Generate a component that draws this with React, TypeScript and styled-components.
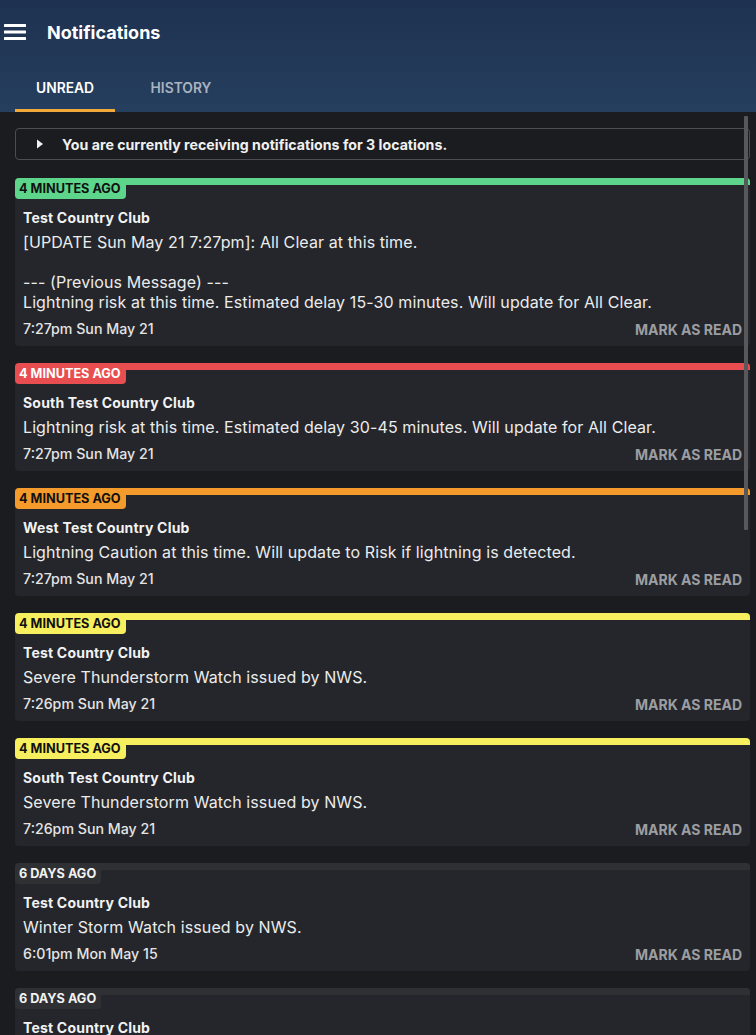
import React, { useState } from "react";
import styled, { createGlobalStyle } from "styled-components";

type Level = "green" | "red" | "orange" | "yellow" | "old";

interface Notice {
  ago: string;
  level: Level;
  club: string;
  message: string;
  time: string;
}

const levelColors: Record<Level, { bg: string; fg: string }> = {
  green: { bg: "#5dd68b", fg: "#111" },
  red: { bg: "#e84d4f", fg: "#fff" },
  orange: { bg: "#f59b2b", fg: "#111" },
  yellow: { bg: "#f7ef5e", fg: "#111" },
  old: { bg: "#2e3034", fg: "#f2f2f2" },
};

const GlobalStyle = createGlobalStyle`
  html, body {
    margin: 0;
    padding: 0;
    background: #1b1c1f;
    font-family: Inter, "Noto Sans", "Liberation Sans", sans-serif;
    color: #ececec;
  }
  * { box-sizing: border-box; }
`;

const Page = styled.div`
  display: flex;
  flex-direction: column;
  height: 100vh;
  background: #1b1c1f;
`;

const Header = styled.header`
  background: linear-gradient(180deg, #1e3150 0%, #263f5e 100%);
  flex-shrink: 0;
`;

const TopBar = styled.div`
  display: flex;
  align-items: center;
  height: 64px;
  padding-left: 4px;
  gap: 21px;
`;

const Title = styled.h1`
  margin: 0;
  font-size: 18px;
  font-weight: 700;
  color: #fff;
`;

const Tabs = styled.div`
  display: flex;
  gap: 16px;
  padding-left: 15px;
  height: 48px;
`;

const Tab = styled.button<{ $active?: boolean }>`
  width: 100px;
  border: none;
  background: transparent;
  font-family: inherit;
  font-size: 13.8px;
  font-weight: 600;
  color: ${(p) => (p.$active ? "#ffffff" : "#aab3c0")};
  border-bottom: 3px solid ${(p) => (p.$active ? "#f2a93b" : "transparent")};
  padding: 3px 0 0;
  cursor: pointer;
`;

const ListArea = styled.div`
  position: relative;
  flex: 1;
  min-height: 0;
`;

const List = styled.main`
  height: 100%;
  overflow-y: auto;
  scrollbar-width: none;
  padding: 16px 6px 16px 15px;
  display: flex;
  flex-direction: column;
  gap: 17px;

  &::-webkit-scrollbar {
    display: none;
  }
`;

const ScrollThumb = styled.div`
  position: absolute;
  top: 4px;
  right: 8px;
  width: 4px;
  height: 414px;
  background: #56585c;
  border-radius: 1px;
  pointer-events: none;
`;

const InfoBox = styled.div`
  display: flex;
  align-items: center;
  height: 32px;
  border: 1px solid #4b4d52;
  border-radius: 4px;
  padding-left: 20px;
  gap: 18px;
  font-size: 14.2px;
  font-weight: 700;
  color: #f0f0f0;
  margin-bottom: 1px;
  flex-shrink: 0;
`;

const Card = styled.article`
  background: #24262b;
  border-radius: 4px;
  flex-shrink: 0;
`;

const CardTop = styled.div`
  display: flex;
  align-items: flex-start;
`;

const Badge = styled.span<{ $level: Level }>`
  height: 21px;
  display: flex;
  align-items: center;
  padding: 0 5px 0 4px;
  border-radius: 4px 0 4px 4px;
  background: ${(p) => levelColors[p.$level].bg};
  color: ${(p) => levelColors[p.$level].fg};
  font-size: 12.7px;
  font-weight: 700;
`;

const Strip = styled.span<{ $level: Level }>`
  flex: 1;
  height: 7px;
  border-radius: 0 4px 0 0;
  background: ${(p) => levelColors[p.$level].bg};
`;

const Body = styled.div`
  padding: 10px 8px 8px 8px;
`;

const Club = styled.div`
  font-size: 14px;
  font-weight: 700;
  line-height: 18px;
  letter-spacing: 0.2px;
  color: #f2f2f2;
`;

const Message = styled.div`
  margin-top: 5px;
  font-size: 16px;
  line-height: 20px;
  letter-spacing: 0.1px;
  color: #ececec;
  white-space: pre-wrap;
`;

const Footer = styled.div`
  margin-top: 8px;
  display: flex;
  justify-content: space-between;
  align-items: center;
  line-height: 18px;
`;

const Time = styled.span`
  font-size: 14.2px;
  font-weight: 500;
  color: #e4e4e4;
`;

const MarkRead = styled.button`
  border: none;
  background: transparent;
  padding: 0;
  font-family: inherit;
  font-size: 14px;
  font-weight: 700;
  color: #9c9ea2;
  cursor: pointer;
`;

const notices: Notice[] = [
  {
    ago: "4 MINUTES AGO",
    level: "green",
    club: "Test Country Club",
    message:
      "[UPDATE Sun May 21 7:27pm]: All Clear at this time.\n\n--- (Previous Message) ---\nLightning risk at this time. Estimated delay 15-30 minutes. Will update for All Clear.",
    time: "7:27pm Sun May 21",
  },
  {
    ago: "4 MINUTES AGO",
    level: "red",
    club: "South Test Country Club",
    message:
      "Lightning risk at this time. Estimated delay 30-45 minutes. Will update for All Clear.",
    time: "7:27pm Sun May 21",
  },
  {
    ago: "4 MINUTES AGO",
    level: "orange",
    club: "West Test Country Club",
    message:
      "Lightning Caution at this time. Will update to Risk if lightning is detected.",
    time: "7:27pm Sun May 21",
  },
  {
    ago: "4 MINUTES AGO",
    level: "yellow",
    club: "Test Country Club",
    message: "Severe Thunderstorm Watch issued by NWS.",
    time: "7:26pm Sun May 21",
  },
  {
    ago: "4 MINUTES AGO",
    level: "yellow",
    club: "South Test Country Club",
    message: "Severe Thunderstorm Watch issued by NWS.",
    time: "7:26pm Sun May 21",
  },
  {
    ago: "6 DAYS AGO",
    level: "old",
    club: "Test Country Club",
    message: "Winter Storm Watch issued by NWS.",
    time: "6:01pm Mon May 15",
  },
  {
    ago: "6 DAYS AGO",
    level: "old",
    club: "Test Country Club",
    message: "Winter Storm Watch issued by NWS.",
    time: "6:00pm Mon May 15",
  },
  {
    ago: "6 DAYS AGO",
    level: "old",
    club: "South Test Country Club",
    message: "Winter Storm Watch issued by NWS.",
    time: "6:00pm Mon May 15",
  },
  {
    ago: "6 DAYS AGO",
    level: "old",
    club: "West Test Country Club",
    message: "Winter Storm Watch issued by NWS.",
    time: "6:00pm Mon May 15",
  },
  {
    ago: "7 DAYS AGO",
    level: "old",
    club: "Test Country Club",
    message: "Lightning risk at this time. Estimated delay 15-30 minutes.",
    time: "4:12pm Sun May 14",
  },
  {
    ago: "7 DAYS AGO",
    level: "old",
    club: "South Test Country Club",
    message: "All Clear at this time.",
    time: "4:40pm Sun May 14",
  },
];

const MenuIcon = () => (
  <svg width="22" height="18" viewBox="0 0 22 18" fill="#ffffff">
    <rect x="0" y="1" width="22" height="3" rx="0.5" />
    <rect x="0" y="7.5" width="22" height="3" rx="0.5" />
    <rect x="0" y="14" width="22" height="3" rx="0.5" />
  </svg>
);

const Caret = () => (
  <svg width="8" height="10" viewBox="0 0 8 10" fill="#f0f0f0">
    <path d="M1 0.5 L7 5 L1 9.5 Z" />
  </svg>
);

const App: React.FC = () => {
  const [tab, setTab] = useState<"unread" | "history">("unread");

  return (
    <Page>
      <GlobalStyle />
      <Header>
        <TopBar>
          <MenuIcon />
          <Title>Notifications</Title>
        </TopBar>
        <Tabs>
          <Tab $active={tab === "unread"} onClick={() => setTab("unread")}>
            UNREAD
          </Tab>
          <Tab $active={tab === "history"} onClick={() => setTab("history")}>
            HISTORY
          </Tab>
        </Tabs>
      </Header>
      <ListArea>
        <List>
          <InfoBox>
            <Caret />
            You are currently receiving notifications for 3 locations.
          </InfoBox>
          {notices.map((n, i) => (
            <Card key={i}>
              <CardTop>
                <Badge $level={n.level}>{n.ago}</Badge>
                <Strip $level={n.level} />
              </CardTop>
              <Body>
                <Club>{n.club}</Club>
                <Message>{n.message}</Message>
                <Footer>
                  <Time>{n.time}</Time>
                  <MarkRead>MARK AS READ</MarkRead>
                </Footer>
              </Body>
            </Card>
          ))}
        </List>
        <ScrollThumb />
      </ListArea>
    </Page>
  );
};

export default App;
